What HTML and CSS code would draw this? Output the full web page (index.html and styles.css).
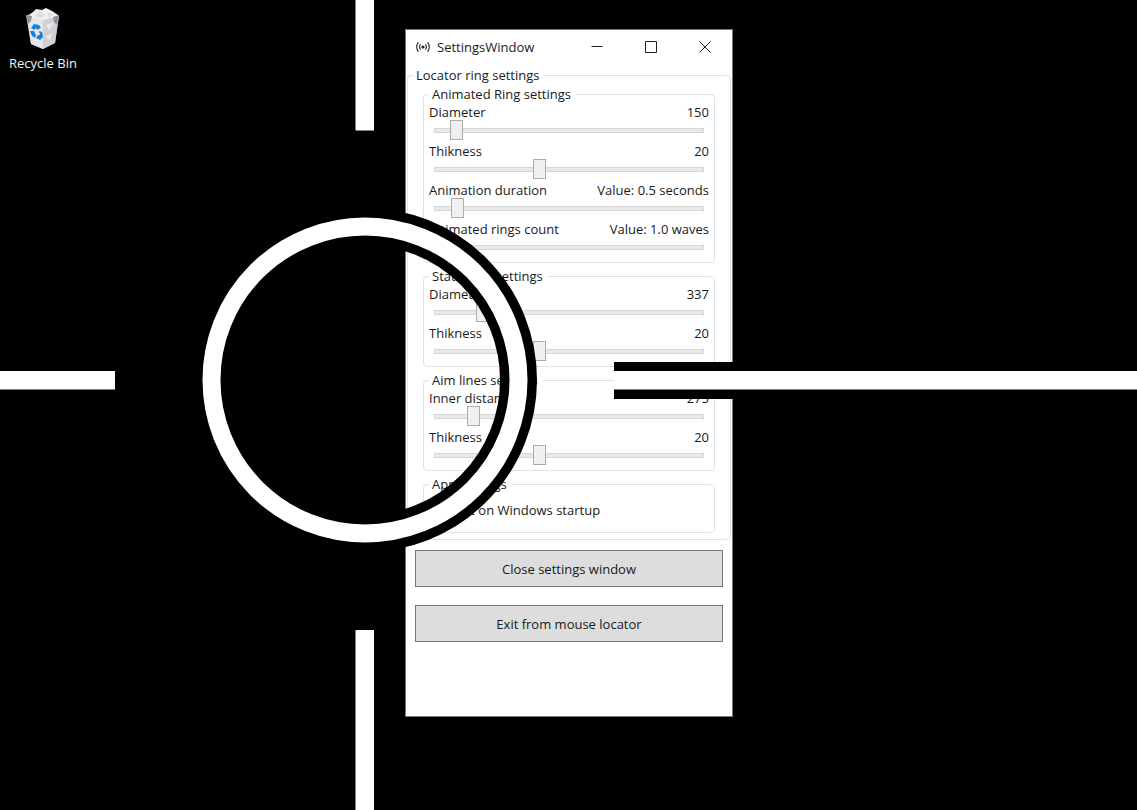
FILE: index.html
```html
<!DOCTYPE html>
<html lang="en">
<head>
<meta charset="utf-8">
<title>SettingsWindow</title>
<link rel="stylesheet" href="styles.css">
</head>
<body class="desktop">
<a class="shortcut" href="#recycle-bin">
  <svg class="shortcut-icon" viewBox="0 0 36 42" aria-hidden="true">
    <path d="M1 7 L34 7 L30 35 L18 41 L6 36 Z" fill="#c9cbce"/>
    <path d="M2 8 L8 4 L11 1 L17 2 L21 0 L27 3 L33 7 L31 11 L18 13 L3 10 Z" fill="#f0f1f2"/>
    <path d="M18 12 L34 8 L30 35 L18 41 Z" fill="#cfd1d4"/>
    <path d="M2 8 L18 12 L18 41 L6 36 Z" fill="#e4e6e9"/>
    <path d="M1 7 L7 8 L6 13 L3 16 Z" fill="#8e9297"/>
    <path d="M28 9 L34 7 L32 17 L29 14 Z" fill="#8e9297"/>
    <path d="M9 8 L15 3 L20 7 L17 10 Z M22 4 L28 6 L24 10 Z" fill="#dcdee0"/>
    <path d="M21 17 L29 14 L24 22 Z M21 28 L28 25 L24 33 Z" fill="#e6e8ea"/>
    <path d="M6 20 L9 16 L14 17 L16 20 L12 22 L11 20 L9 22 Z M5 23 L9 23 L11 27 L10 30 L7 28 Z M14 23 L17 24 L18 29 L15 32 L11 30 L13 27 L15 27 Z" fill="#1581dc"/>
  </svg>
  <span class="shortcut-name">Recycle Bin</span>
</a>

<main class="window">
  <header class="titlebar">
    <svg class="app-icon" viewBox="0 0 14 12" aria-hidden="true">
      <circle cx="7" cy="6" r="1.6" fill="#222"/>
      <path d="M4.6 3.2 Q2.6 6 4.6 8.8 M9.4 3.2 Q11.4 6 9.4 8.8 M2.4 1.2 Q-1 6 2.4 10.8 M11.6 1.2 Q15 6 11.6 10.8" fill="none" stroke="#222" stroke-width="1.1"/>
    </svg>
    <h1 class="title">SettingsWindow</h1>
    <div class="controls">
      <button class="control" aria-label="Minimize"><svg viewBox="0 0 12 12"><path d="M0.500 5.500H11.500"/></svg></button>
      <button class="control" aria-label="Maximize"><svg viewBox="0 0 12 12"><path d="M.5 .5H11.500V11.500H.5Z"/></svg></button>
      <button class="control" aria-label="Close"><svg viewBox="0 0 12 12"><path d="M.5 .5L11.500 11.500M11.500 .5L.5 11.500"/></svg></button>
    </div>
  </header>

  <fieldset class="group outer">
    <legend>Locator ring settings</legend>
    <div class="stack">
      <fieldset class="group inner">
        <legend>Animated Ring settings</legend>
        <div class="setting"><label for="a-diameter">Diameter</label><output for="a-diameter">150</output><input id="a-diameter" type="range" min="0" max="1000" value="59"></div>
        <div class="setting"><label for="a-thick">Thikness</label><output for="a-thick">20</output><input id="a-thick" type="range" min="0" max="1000" value="385"></div>
        <div class="setting"><label for="a-duration">Animation duration</label><output for="a-duration">Value: 0.5 seconds</output><input id="a-duration" type="range" min="0" max="1000" value="63"></div>
        <div class="setting"><label for="a-count">Animated rings count</label><output for="a-count">Value: 1.0 waves</output><input id="a-count" type="range" min="0" max="1000" value="0"></div>
      </fieldset>
      <fieldset class="group inner">
        <legend>Static ring settings</legend>
        <div class="setting"><label for="s-diameter">Diameter</label><output for="s-diameter">337</output><input id="s-diameter" type="range" min="0" max="1000" value="161"></div>
        <div class="setting"><label for="s-thick">Thikness</label><output for="s-thick">20</output><input id="s-thick" type="range" min="0" max="1000" value="385"></div>
      </fieldset>
      <fieldset class="group inner">
        <legend>Aim lines settings</legend>
        <div class="setting"><label for="l-distance">Inner distance</label><output for="l-distance">275</output><input id="l-distance" type="range" min="0" max="1000" value="127"></div>
        <div class="setting"><label for="l-thick">Thikness</label><output for="l-thick">20</output><input id="l-thick" type="range" min="0" max="1000" value="385"></div>
      </fieldset>
      <fieldset class="group inner">
        <legend>App settings</legend>
        <label class="check"><input type="checkbox">Start on Windows startup</label>
      </fieldset>
    </div>
  </fieldset>

  <div class="actions">
    <button class="action">Close settings window</button>
    <button class="action">Exit from mouse locator</button>
  </div>
</main>

<svg class="locator" aria-hidden="true">
  <circle cx="365" cy="380" r="153.500" class="halo"/>
  <rect x="614" y="362" width="100%" height="37" fill="#000"/>
  <circle cx="365" cy="380" r="153.500" class="ring"/>
  <rect x="355.500" y="0" width="18.500" height="130.500" fill="#fff"/>
  <rect x="355.500" y="630" width="18.500" height="100%" fill="#fff"/>
  <rect x="0" y="371" width="115" height="18.500" fill="#fff"/>
  <rect x="614" y="371" width="100%" height="18.500" fill="#fff"/>
</svg>
</body>
</html>
```
FILE: styles.css
```css
* { box-sizing: border-box; }

.desktop {
  margin: 0;
  min-height: 100vh;
  position: relative;
  overflow: hidden;
  background: #000;
  color: #1a1a1a;
  font: 13px/18px "Open Sans", "Noto Sans", sans-serif;
}

.shortcut {
  display: inline-flex;
  flex-direction: column;
  align-items: center;
  gap: 4px;
  padding: 8px 9px 0;
  color: #f4f4f4;
  text-decoration: none;
}
.shortcut-icon { width: 36px; height: 42px; }

.window {
  position: absolute;
  left: 405px;
  top: 29px;
  width: 328px;
  padding-bottom: 74px;
  background: #fff;
  border: 1px solid #777;
}

.titlebar {
  display: flex;
  align-items: center;
  height: 34px;
  margin-bottom: 2px;
  padding-left: 10px;
}
.app-icon { width: 14px; height: 12px; }
.title {
  margin: 0 0 0 7px;
  font-size: 13px;
  font-weight: 400;
}
.controls { display: flex; margin-left: auto; }
.control {
  display: flex;
  align-items: center;
  justify-content: center;
  width: 54px;
  height: 34px;
  padding: 0;
  border: 0;
  background: none;
}
.control svg {
  width: 12px;
  height: 12px;
  fill: none;
  stroke: #222;
}

.group {
  min-width: 0;
  border: 1px solid #dbe3ea;
  border-radius: 4px;
}
.group legend { padding: 0 5px 0 3px; line-height: 18px; }
.outer { margin: 0 1px; padding: 1px 5px 6px; }
.stack {
  display: flex;
  flex-direction: column;
  gap: 4px;
  padding: 0 10px;
}
.inner { margin: 0; padding: 1px 5px 5px; }

.setting {
  display: grid;
  grid-template-columns: 1fr auto;
}
.setting + .setting { margin-top: 3px; }
.setting label, .setting output { line-height: 16px; }
.setting input {
  grid-column: 1 / -1;
  appearance: none;
  height: 20px;
  margin: 0 5px;
  background: none;
}
.setting input::-webkit-slider-runnable-track {
  height: 5px;
  background: #e7eaea;
  border: 1px solid #d6d6d6;
}
.setting input::-webkit-slider-thumb {
  appearance: none;
  width: 13px;
  height: 20px;
  margin-top: -9px;
  background: #f0f0f0;
  border: 1px solid #acacac;
}

.check {
  display: flex;
  align-items: center;
  gap: 4px;
  padding: 7px 0 8px;
}
.check input { width: 13px; height: 13px; margin: 0; }

.actions {
  display: flex;
  flex-direction: column;
  gap: 18px;
  padding: 10px 9px 0;
}
.action {
  height: 37px;
  border: 1px solid #777;
  background: #ddd;
  color: inherit;
  font: inherit;
}

.locator {
  position: absolute;
  inset: 0;
  width: 100%;
  height: 100%;
  pointer-events: none;
}
.halo { fill: none; stroke: #000; stroke-width: 37px; }
.ring { fill: none; stroke: #fff; stroke-width: 18px; }
```
